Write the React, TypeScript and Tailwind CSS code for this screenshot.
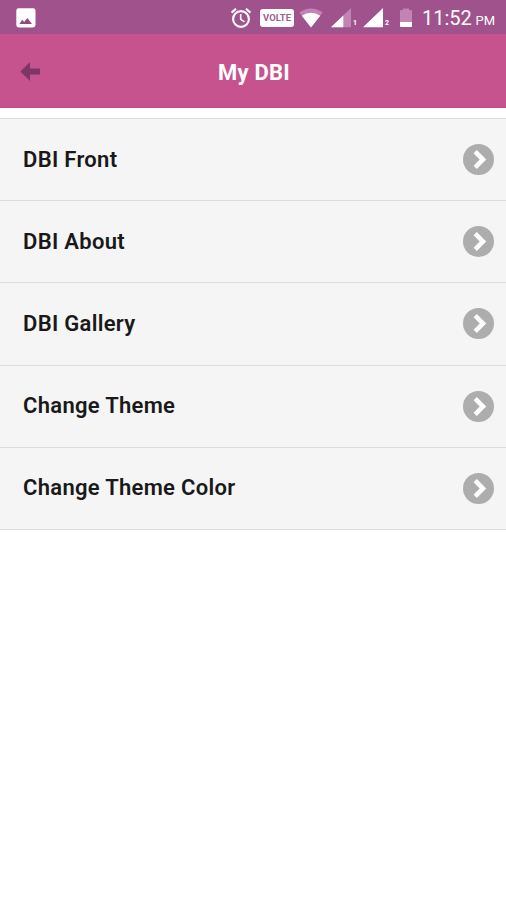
interface MenuItem {
  id: string;
  label: string;
}

const menuItems: MenuItem[] = [
  { id: "front", label: "DBI Front" },
  { id: "about", label: "DBI About" },
  { id: "gallery", label: "DBI Gallery" },
  { id: "theme", label: "Change Theme" },
  { id: "color", label: "Change Theme Color" },
];

const PictureIcon = () => (
  <svg className="h-5 w-5" viewBox="0 0 20 20">
    <rect x="0.3" y="0.3" width="19.2" height="19.2" rx="2.4" fill="#fff" />
    <path d="M3.4 16l2.8-4.2 2 2.2 3.2-3.9 4.6 5.9z" fill="#8f4a80" />
  </svg>
);

const AlarmIcon = () => (
  <svg className="h-[22px] w-[22px]" viewBox="0 0 22 22" fill="none" stroke="#fff">
    <circle cx="11" cy="12" r="7.9" strokeWidth="2.1" />
    <path d="M1.6 5.6L6 1.8M20.4 5.6L16 1.8" strokeWidth="2.1" />
    <path d="M10.7 7v5.3l3.8 2.6" strokeWidth="1.6" />
  </svg>
);

const WifiIcon = () => (
  <svg className="h-5 w-6" viewBox="0 0 24 20">
    <path d="M12 19.4L0.3 4.6Q12 -3.8 23.7 4.6z" fill="#c384b4" />
    <path d="M12 19.4L2.8 7.8Q12 1.8 21.2 7.8z" fill="#fff" />
  </svg>
);

const SignalIcon = ({ full = false }: { full?: boolean }) => (
  <svg className="h-5 w-5" viewBox="0 0 20 20">
    <path d="M0 19.2L20 0v19.2z" fill={full ? "#fff" : "#c384b4"} />
    {!full && <path d="M0 19.2L12.3 7.4v11.8z" fill="#fff" />}
  </svg>
);

const BatteryIcon = () => (
  <svg className="h-5 w-3" viewBox="0 0 12 20">
    <path d="M0 3.2Q0 2 1.2 2H3V0.6h6v1.4h1.8Q12 2 12 3.2V14H0z" fill="#c384b4" />
    <path d="M0 14h12v4.2q0 .8-.8.8H.8Q0 19 0 18.2z" fill="#fff" />
  </svg>
);

const StatusBar = () => (
  <div className="flex h-[34px] items-center bg-[#9f528b] pl-4 pr-[11px] pt-px text-white">
    <PictureIcon />
    <div className="ml-auto flex items-center">
      <AlarmIcon />
      <span className="ml-2 flex h-[18px] w-[34px] items-center justify-center rounded-[3px] bg-white text-[9.5px] font-bold leading-none text-[#a0608f]">
        VOLTE
      </span>
      <span className="ml-[5px]"><WifiIcon /></span>
      <span className="ml-2"><SignalIcon /></span>
      <span className="ml-0.5 mt-3 w-[5px] text-[7px] font-bold leading-none">1</span>
      <span className="ml-[5px]"><SignalIcon full /></span>
      <span className="ml-0.5 mt-3 w-[5px] text-[7px] font-bold leading-none">2</span>
      <span className="ml-[10px]"><BatteryIcon /></span>
      <span className="ml-[10px] flex w-[73px] items-baseline justify-between whitespace-nowrap">
        <span className="text-[20px] leading-6">11:52</span>
        <span className="text-[13px] leading-none">PM</span>
      </span>
    </div>
  </div>
);

const Header = () => (
  <header className="relative flex h-[74px] items-center justify-center border-b border-[#b9508a] bg-[#c6538e]">
    <button className="absolute left-5 top-[27px]" aria-label="Back">
      <svg className="h-5 w-5" viewBox="0 0 20 20">
        <path d="M0.3 10.5L10 1v6.6h10v5.8H10V20z" fill="#7e3568" />
      </svg>
    </button>
    <h1 className="pl-0.5 pt-1 text-[22px] font-bold leading-7 tracking-[0.2px] text-white">My DBI</h1>
  </header>
);

const MenuRow = ({ label }: { label: string }) => (
  <li className="flex h-[82.2px] items-center justify-between border-b border-[#dddddd] pl-[23px] pr-3">
    <span className="text-[22px] font-semibold leading-7 tracking-[0.3px] text-[#191919]">{label}</span>
    <svg className="h-[31px] w-[31px]" viewBox="0 0 31 31">
      <circle cx="15.5" cy="15.5" r="15.5" fill="#adadad" />
      <path d="M12.2 7.7l7.8 7.8-7.8 7.8" fill="none" stroke="#fff" strokeWidth="4.6" />
    </svg>
  </li>
);

export default function App() {
  return (
    <div className="h-[900px] w-[506px] overflow-hidden bg-white font-['Roboto',sans-serif]">
      <StatusBar />
      <Header />
      <ul className="mt-[10px] border-t border-[#dddddd] bg-[#f5f5f5]">
        {menuItems.map((item) => (
          <MenuRow key={item.id} label={item.label} />
        ))}
      </ul>
    </div>
  );
}
